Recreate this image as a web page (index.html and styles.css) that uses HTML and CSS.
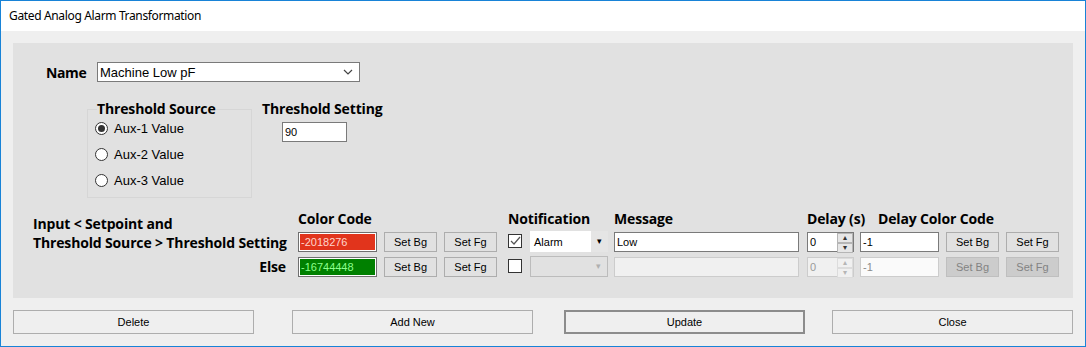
FILE: index.html
```html
<!DOCTYPE html>
<html lang="en">
<head>
    <meta charset="UTF-8">
    <title>Gated Analog Alarm Transformation</title>
    <link rel="stylesheet" href="styles.css">
</head>
<body>
    <div class="window">
        <div class="titlebar">Gated Analog Alarm Transformation</div>
        <div class="client">
            <div class="panel">
                <div class="name_row">
                    <label class="lbl_bold name_lbl">Name</label>
                    <div class="combo name_combo">
                        <span>Machine Low pF</span>
                        <svg width="10" height="6" viewBox="0 0 10 6"><polyline points="1,1 5,5 9,1" fill="none" stroke="#444" stroke-width="1.2"/></svg>
                    </div>
                </div>

                <div class="threshold_row">
                    <fieldset class="group">
                        <legend class="lbl_bold">Threshold Source</legend>
                        <label class="radio_line"><span class="radio checked"></span>Aux-1 Value</label>
                        <label class="radio_line"><span class="radio"></span>Aux-2 Value</label>
                        <label class="radio_line"><span class="radio"></span>Aux-3 Value</label>
                    </fieldset>
                    <div class="setting">
                        <div class="lbl_bold">Threshold Setting</div>
                        <div class="txt setting_txt">90</div>
                    </div>
                </div>

                <div class="cond">
                    <div class="lbl_bold cond_lbl">Input &lt; Setpoint and<br>Threshold Source &gt; Threshold Setting</div>
                    <div class="lbl_bold hd c2">Color Code</div>
                    <div class="lbl_bold hd c5">Notification</div>
                    <div class="lbl_bold hd c7">Message</div>
                    <div class="lbl_bold hd c8">Delay (s)</div>
                    <div class="lbl_bold hd c9 delay_hd">Delay Color Code</div>

                    <!-- row 1 -->
                    <div class="txt color_box red r1 c2">-2018276</div>
                    <div class="btn r1 c3">Set Bg</div>
                    <div class="btn r1 c4">Set Fg</div>
                    <div class="chk checked r1 c5">
                        <svg width="12" height="12" viewBox="0 0 12 12"><polyline points="2,6 5,9 11,2" fill="none" stroke="#555" stroke-width="1.2"/></svg>
                    </div>
                    <div class="drop r1 c6"><span>Alarm</span><i class="drop_btn">&#9662;</i></div>
                    <div class="txt msg r1 c7">Low</div>
                    <div class="num r1 c8"><span>0</span><i class="spin"><b>&#9652;</b><b>&#9662;</b></i></div>
                    <div class="txt delay_txt r1 c9">-1</div>
                    <div class="btn r1 c10">Set Bg</div>
                    <div class="btn r1 c11">Set Fg</div>

                    <!-- row 2 -->
                    <div class="lbl_bold else_lbl r2">Else</div>
                    <div class="txt color_box green r2 c2">-16744448</div>
                    <div class="btn r2 c3">Set Bg</div>
                    <div class="btn r2 c4">Set Fg</div>
                    <div class="chk r2 c5"></div>
                    <div class="drop off r2 c6"><span></span><i class="drop_btn">&#9662;</i></div>
                    <div class="txt msg off r2 c7"></div>
                    <div class="num off r2 c8"><span>0</span><i class="spin"><b>&#9652;</b><b>&#9662;</b></i></div>
                    <div class="txt delay_txt off_txt r2 c9">-1</div>
                    <div class="btn off r2 c10">Set Bg</div>
                    <div class="btn off r2 c11">Set Fg</div>
                </div>
            </div>

            <div class="actions">
                <div class="btn big">Delete</div>
                <div class="btn big">Add New</div>
                <div class="btn big default">Update</div>
                <div class="btn big">Close</div>
            </div>
        </div>
    </div>
</body>
</html>
```

FILE: styles.css
```css
html, body { margin:0; padding:0; }
body { width:1086px; height:347px; overflow:hidden; background:#fff;
    font-family:"Liberation Sans", Arial, sans-serif; font-size:11px; color:#000; }

.window { box-sizing:border-box; width:1086px; height:347px; border:1px solid #1883d7;
    display:flex; flex-direction:column; }
.titlebar { height:30px; line-height:30px; padding-left:8px; background:#fff;
    font-family:"Noto Sans", "Open Sans", sans-serif; font-size:12px; letter-spacing:-0.35px; color:#000; }
.client { flex:1; background:#efefef; padding:12px 12px 0 12px; }

.panel { background:#e1e1e1; height:255px; box-sizing:border-box; padding:19px 0 0 0; }

.lbl_bold { font-family:"Open Sans", "Noto Sans", sans-serif; font-weight:bold; font-size:14px;
    letter-spacing:-0.15px; color:#000; white-space:nowrap; }

/* name row */
.name_row { display:flex; align-items:center; padding-left:33px; }
.name_lbl { width:51px; letter-spacing:-0.4px; }
.combo { box-sizing:border-box; height:20px; background:#fff; border:1px solid #7a7a7a;
    display:flex; align-items:center; justify-content:space-between; padding:0 6px 0 2px;
    font-size:13px; }
.name_combo { width:263px; }

/* threshold */
.threshold_row { display:flex; align-items:flex-start; padding-left:74px; margin-top:19px; }
.group { box-sizing:border-box; width:165px; height:97px; margin:0; padding:0 0 0 9px;
    border:1px solid #d6d6d6; }
.group legend { padding:0; line-height:16px; }
.radio_line { display:flex; align-items:center; height:26px; margin-left:-2px; font-size:13px; }
.radio_line:first-of-type { margin-top:-2px; }
.radio { box-sizing:border-box; width:13px; height:13px; border:1px solid #333; border-radius:50%;
    background:#fff; margin-right:6px; display:flex; align-items:center; justify-content:center; }
.radio.checked::after { content:""; width:7px; height:7px; border-radius:50%; background:#333; }
.setting { margin-left:10px; }
.setting .lbl_bold { line-height:16px; }
.setting_txt { width:65px; margin:5px 0 0 20px; }

/* generic inputs */
.txt { box-sizing:border-box; height:20px; line-height:18px; padding-left:2px; background:#fff;
    border:1px solid #7a7a7a; white-space:nowrap; overflow:hidden; }
.btn { box-sizing:border-box; height:20px; line-height:18px; text-align:center; background:#e1e1e1;
    border:1px solid #adadad; }
.btn.off { background:#cccccc; border-color:#bfbfbf; color:#838383; }

/* condition grid */
.cond { display:grid; margin:11px 0 0 20px;
    grid-template-columns:265px 86px 60px 64px 22px 84px 193px 53px 86px 60px 53px;
    grid-template-rows:23px 25px 21px; }
.hd { grid-row:1; line-height:20px; align-self:start; }
.cond_lbl { grid-column:1; grid-row:1 / 3; align-self:end; line-height:19px; margin-bottom:5px; }
.else_lbl { grid-column:1; text-align:right; padding-right:12px; align-self:center; }
.r1 { grid-row:2; align-self:start; }
.r2 { grid-row:3; align-self:start; }
.c2 { grid-column:2; } .c3 { grid-column:3; } .c4 { grid-column:4; } .c5 { grid-column:5; }
.c6 { grid-column:6; } .c7 { grid-column:7; } .c8 { grid-column:8; } .c9 { grid-column:9; }
.c10 { grid-column:10; } .c11 { grid-column:11; }
.c5.hd { grid-column:5 / 7; }
.delay_hd { padding-left:18px; }

.color_box { width:79px; border:1px solid #6f6f6f; box-shadow:inset 0 0 0 1px #fff; padding-left:2px; }
.red { background:#e1341c; color:#ffd6cc; }
.green { background:#008000; color:#8cff8c; }
.c3.btn, .c4.btn, .c10.btn, .c11.btn { width:53px; }

.chk { box-sizing:border-box; width:14px; height:14px; margin-top:2px; border:1px solid #333;
    background:#fff; display:flex; align-items:center; justify-content:center; }

.drop { box-sizing:border-box; width:78px; height:21px; margin-top:-1px; background:#fff;
    display:flex; align-items:center; justify-content:space-between; }
.drop span { padding-left:4px; }
.drop_btn { font-style:normal; width:17px; height:21px; line-height:21px; text-align:center;
    background:#e5e5e5; font-size:9px; }
.drop.off { background:#e1e1e1; border:1px solid #bcbcbc; }
.drop.off .drop_btn { background:transparent; color:#b0b0b0; height:19px; line-height:19px; }

.msg { width:185px; }
.msg.off { background:#f0f0f0; border-color:#cccccc; }

.num { box-sizing:border-box; width:47px; height:20px; background:#fff; border:1px solid #7a7a7a;
    display:flex; justify-content:space-between; }
.num span { padding-left:2px; line-height:18px; }
.spin { font-style:normal; width:16px; display:flex; flex-direction:column; }
.spin b { flex:1; font-weight:normal; font-size:8px; line-height:8px; text-align:center;
    background:#e6e6e6; border:1px solid #b5b5b5; color:#333; }
.num.off { background:#f0f0f0; border-color:#cccccc; color:#9a9a9a; }
.num.off .spin b { background:#f0f0f0; border-color:#dcdcdc; color:#b5b5b5; }

.delay_txt { width:79px; }
.off_txt { border-color:#cccccc; color:#8a8a8a; background:#fafafa; }

/* bottom buttons */
.actions { display:grid; grid-template-columns:279px 272px 268px 241px; margin-top:12px; }
.btn.big { width:241px; height:24px; line-height:22px; background:#efefef; font-size:11px; }
.btn.default { border:2px solid #8c8c8c; line-height:20px; }
```
